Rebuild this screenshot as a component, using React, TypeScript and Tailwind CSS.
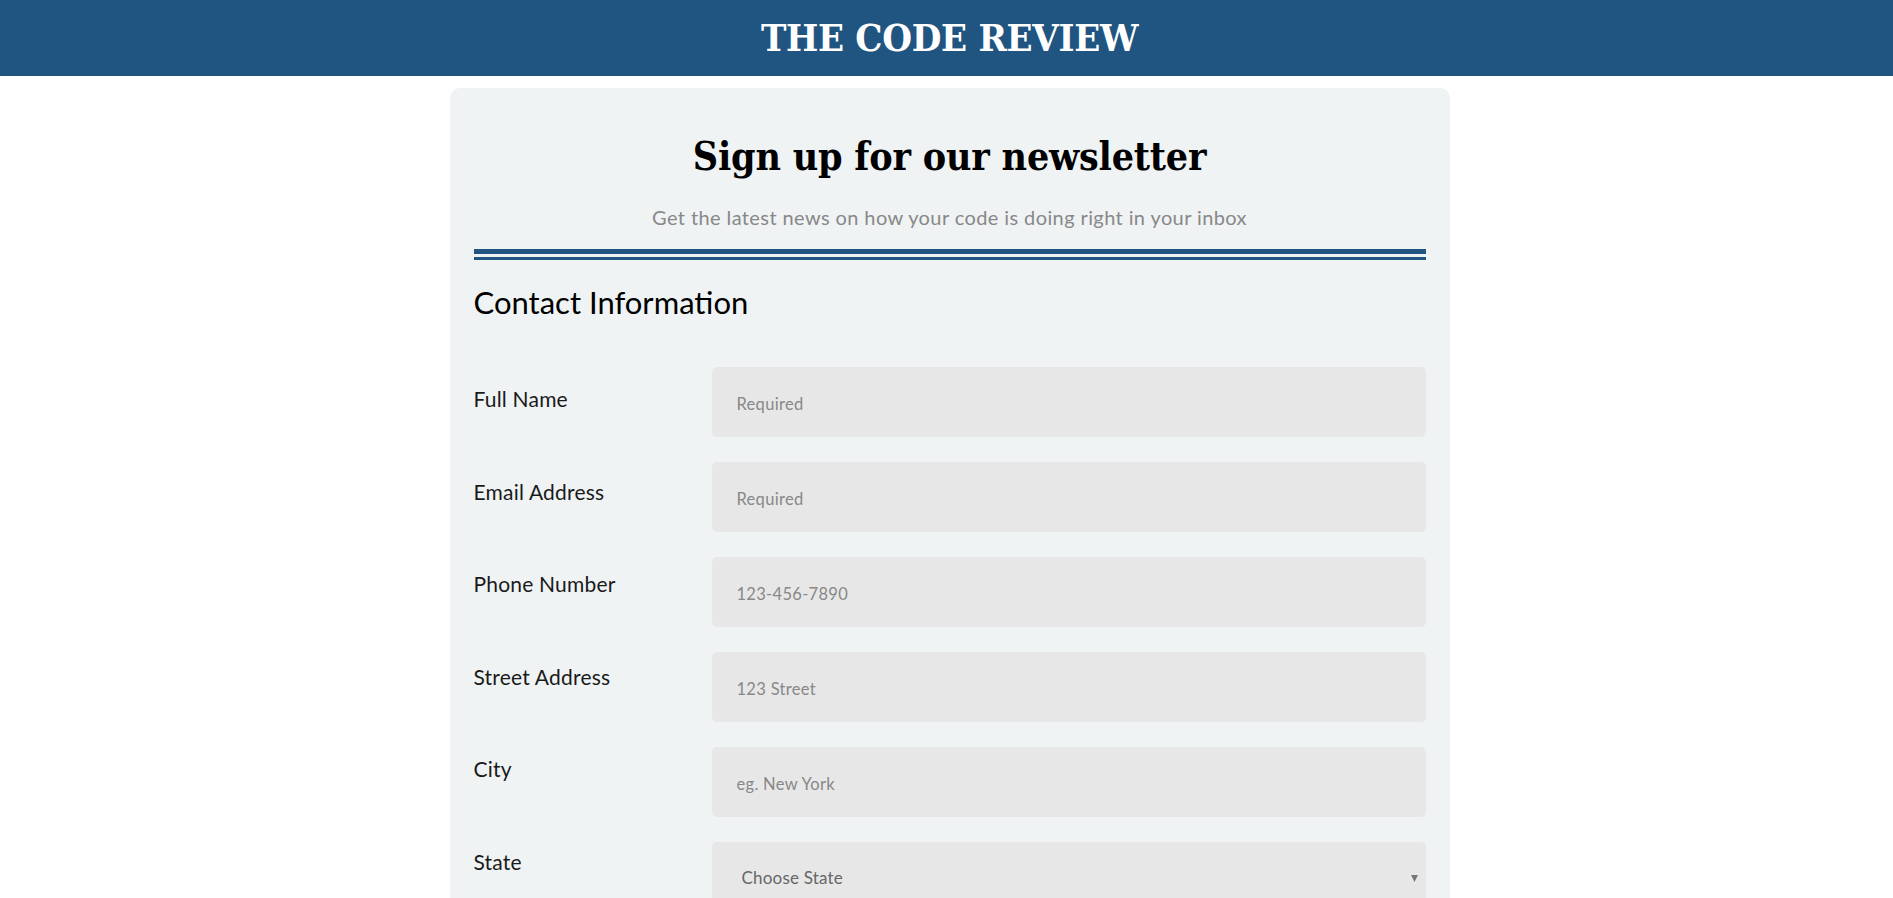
import { useState } from 'react';

const serif = "font-['DejaVu_Serif_Condensed','DejaVu_Serif',serif]";
const sans = "font-['Lato','Open_Sans',sans-serif]";

const fields = [
  { label: 'Full Name', placeholder: 'Required', type: 'text' },
  { label: 'Email Address', placeholder: 'Required', type: 'email' },
  { label: 'Phone Number', placeholder: '123-456-7890', type: 'tel' },
  { label: 'Street Address', placeholder: '123 Street', type: 'text' },
  { label: 'City', placeholder: 'eg. New York', type: 'text' },
];

const states = ['Alabama', 'Alaska', 'Arizona', 'California', 'Colorado', 'New York', 'Texas'];

export default function App() {
  const [state, setState] = useState('');

  return (
    <div className={`min-h-screen bg-white ${sans}`}>
      <header className="h-[76px] bg-[#1f5580] flex items-center justify-center pl-[6px]">
        <h1 className={`${serif} text-white font-bold text-[38px] leading-none tracking-[-0.3px]`}>
          THE CODE REVIEW
        </h1>
      </header>

      <div className="pl-[6px]">
        <main className="w-[1000px] mx-auto mt-3 bg-[#eff3f4] rounded-[10px] px-6 pt-[44px] pb-10">
          <h2 className={`${serif} text-black font-bold text-[39px] leading-[48px] tracking-[-0.2px] text-center`}>
            Sign up for our newsletter
          </h2>
          <p className="text-[#888] text-[20px] leading-7 tracking-[0.4px] text-center mt-[23px]">
            Get the latest news on how your code is doing right in your inbox
          </p>

          <div className="mt-[18px] flex flex-col gap-[3px]">
            <div className="h-[5px] bg-[#1f5580]" />
            <div className="h-[3px] bg-[#1f5580]" />
          </div>

          <h3 className="text-black text-[31px] leading-9 mt-[24px]">Contact Information</h3>

          <form className="flex mt-[47px]" onSubmit={(e) => e.preventDefault()}>
            <div className="w-[238px] shrink-0 flex flex-col gap-[64.5px] pt-[18px]">
              {fields.map((f) => (
                <label key={f.label} className="text-[21px] leading-7 tracking-[0.2px] text-[#1a1a1a]">
                  {f.label}
                </label>
              ))}
              <label className="text-[21px] leading-7 tracking-[0.2px] text-[#1a1a1a]">State</label>
            </div>

            <div className="flex-1 flex flex-col gap-[25px]">
              {fields.map((f) => (
                <input
                  key={f.label}
                  type={f.type}
                  placeholder={f.placeholder}
                  className="h-[70px] w-full rounded-[5px] bg-[#e7e7e7] px-[25px] pt-1 text-[16.5px] tracking-[0.3px] text-[#333] placeholder:text-[#888] outline-none"
                />
              ))}
              <div className="relative">
                <select
                  value={state}
                  onChange={(e) => setState(e.target.value)}
                  className="h-[70px] w-full appearance-none rounded-[5px] bg-[#e7e7e7] pl-[30px] pt-[2px] text-[17px] tracking-[0.2px] text-[#666] outline-none"
                >
                  <option value="">Choose State</option>
                  {states.map((s) => (
                    <option key={s} value={s}>
                      {s}
                    </option>
                  ))}
                </select>
                <svg
                  className="pointer-events-none absolute right-[8px] top-[33px]"
                  width="7"
                  height="7"
                  viewBox="0 0 7 7"
                >
                  <path d="M0 0h7L3.5 7z" fill="#777" />
                </svg>
              </div>
            </div>
          </form>
        </main>
      </div>
    </div>
  );
}
